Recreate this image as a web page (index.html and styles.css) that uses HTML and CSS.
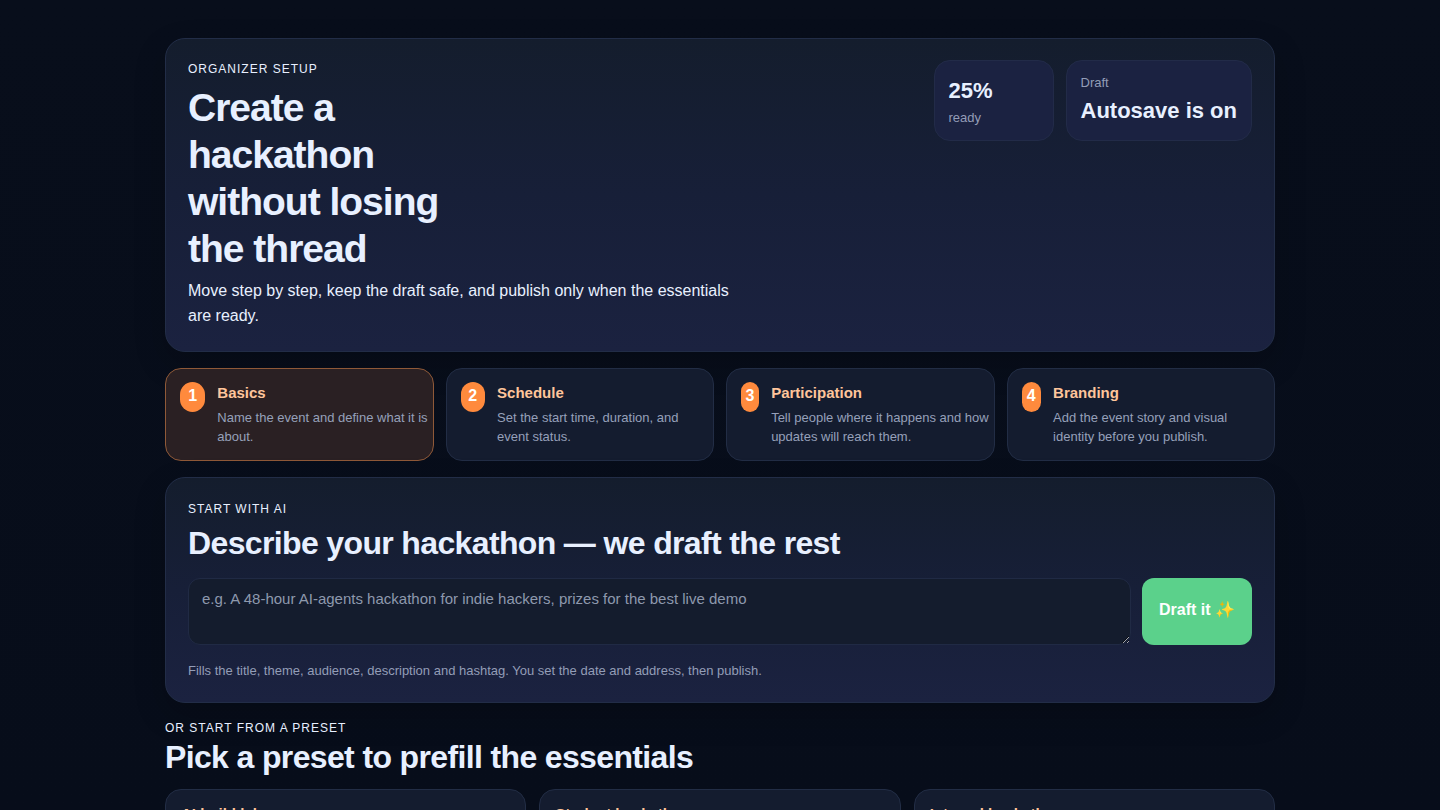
FILE: index.html
```html
<!DOCTYPE html>
<html lang="en">
<head>
<meta charset="utf-8">
<meta name="viewport" content="width=device-width, initial-scale=1">
<title>Create a hackathon</title>
<link rel="stylesheet" href="styles.css">
</head>
<body>
<main class="page">
  <header class="panel hero">
    <div class="hero-copy">
      <p class="eyebrow">Organizer setup</p>
      <h1 class="title">Create a hackathon without losing the thread</h1>
      <p class="lead">Move step by step, keep the draft safe, and publish only when the essentials are ready.</p>
    </div>
    <div class="stats">
      <div class="stat"><strong class="stat-value">25%</strong><span class="stat-label">ready</span></div>
      <div class="stat"><span class="stat-label">Draft</span><strong class="stat-value">Autosave is on</strong></div>
    </div>
  </header>

  <nav class="steps" aria-label="Setup steps">
    <button type="button" class="step step-active" aria-current="step">
      <span class="badge">1</span>
      <span class="step-text"><strong class="card-title">Basics</strong><span class="step-note">Name the event and define what it is about.</span></span>
    </button>
    <button type="button" class="step">
      <span class="badge">2</span>
      <span class="step-text"><strong class="card-title">Schedule</strong><span class="step-note">Set the start time, duration, and event status.</span></span>
    </button>
    <button type="button" class="step">
      <span class="badge">3</span>
      <span class="step-text"><strong class="card-title">Participation</strong><span class="step-note">Tell people where it happens and how updates will reach them.</span></span>
    </button>
    <button type="button" class="step">
      <span class="badge">4</span>
      <span class="step-text"><strong class="card-title">Branding</strong><span class="step-note">Add the event story and visual identity before you publish.</span></span>
    </button>
  </nav>

  <section class="panel">
    <p class="eyebrow">Start with AI</p>
    <h2 class="subtitle" id="ai-title">Describe your hackathon — we draft the rest</h2>
    <form class="prompt">
      <textarea class="prompt-input" rows="2" aria-labelledby="ai-title" placeholder="e.g. A 48-hour AI-agents hackathon for indie hackers, prizes for the best live demo"></textarea>
      <button type="button" class="prompt-button">Draft it ✨</button>
    </form>
    <p class="hint">Fills the title, theme, audience, description and hashtag. You set the date and address, then publish.</p>
  </section>

  <section class="presets">
    <p class="eyebrow">Or start from a preset</p>
    <h2 class="subtitle">Pick a preset to prefill the essentials</h2>
    <div class="preset-grid">
      <button type="button" class="preset"><strong class="card-title">AI build lab</strong></button>
      <button type="button" class="preset"><strong class="card-title">Student hackathon</strong></button>
      <button type="button" class="preset"><strong class="card-title">Internal hackathon</strong></button>
    </div>
  </section>
</main>
</body>
</html>
```
FILE: styles.css
```css
* { box-sizing: border-box; }

html { background: #070d1a; }

body {
  margin: 0;
  height: 100vh;
  overflow: hidden;
  color: #e8f0ff;
  font: 16px/25px "Liberation Sans", Arial, sans-serif;
  background: linear-gradient(180deg, #080e1b, #070d1a);
}

h1, h2, p { margin: 0; }

button, textarea { font: inherit; color: inherit; }

.page {
  max-width: 1142px;
  margin: 0 auto;
  padding: 38px 16px;
  display: grid;
  gap: 16px;
}

.panel {
  padding: 22px;
  border: 1px solid #222d47;
  border-radius: 20px;
  background: linear-gradient(180deg, #141d2d, #171f38 50%, #1b2240);
  box-shadow: 0 12px 32px rgba(0, 0, 0, 0.2);
}

.hero {
  display: flex;
  justify-content: space-between;
  align-items: flex-start;
  gap: 24px;
  padding-top: 21px;
  padding-bottom: 23px;
}

.hero-copy { max-width: 560px; }

.eyebrow {
  font-size: 12px;
  line-height: 18px;
  letter-spacing: 1px;
  text-transform: uppercase;
}

.title {
  max-width: 270px;
  margin: 6px 0;
  font-size: 39px;
  line-height: 47px;
  letter-spacing: -1px;
}

.stats { display: flex; gap: 12px; }

.stat {
  min-width: 120px;
  padding: 13px 14px;
  display: grid;
  gap: 2px;
  border: 1px solid #222b48;
  border-radius: 16px;
  background: #1b2241;
}

.stat-value { font-size: 22px; line-height: 33px; }
.stat-label { font-size: 13px; line-height: 18px; color: #939db7; }

.steps {
  display: grid;
  grid-template-columns: repeat(4, 1fr);
  gap: 12px;
}

.step {
  display: flex;
  align-items: flex-start;
  gap: 12px;
  padding: 13px 4px 14px 14px;
  border: 1px solid #222d45;
  border-radius: 16px;
  background: #141c2f;
  text-align: left;
}

.step-active { background: #2a2023; border-color: #8f5938; }

.badge {
  width: 30px;
  height: 30px;
  border-radius: 15px;
  background: #ff8a3d;
  color: #fff;
  font-weight: 700;
  line-height: 28px;
  text-align: center;
}

.step-text { display: grid; gap: 4px; }

.card-title {
  color: #ffc59b;
  font-size: 15px;
  line-height: 22px;
}

.step-note { font-size: 13px; line-height: 19px; color: #96a0ba; }

.subtitle {
  margin-top: 6px;
  font-size: 32px;
  line-height: 38px;
  letter-spacing: -0.02em;
}

.prompt {
  display: flex;
  gap: 11px;
  margin: 16px 0;
}

.prompt-input {
  flex: 1;
  min-width: 0;
  height: 67px;
  padding: 8px 13px;
  border: 1px solid #202a44;
  border-radius: 12px;
  background: #141c2d;
  font-size: 15px;
  line-height: 23px;
  resize: vertical;
}

.prompt-input::placeholder { color: #8e99ad; }

.prompt-button {
  padding: 0 17px 4px;
  border: 0;
  border-radius: 12px;
  background: #5bd18b;
  color: #fff;
  font-weight: 700;
}

.hint { font-size: 13px; line-height: 19px; color: #939db7; }

.presets .subtitle { margin-top: 1px; }

.preset-grid {
  display: grid;
  grid-template-columns: repeat(3, 1fr);
  gap: 13px;
  margin-top: 13px;
}

.preset {
  min-height: 120px;
  padding: 13px 15px;
  display: flex;
  align-items: flex-start;
  border: 1px solid #222d45;
  border-radius: 16px;
  background: #141c2f;
  text-align: left;
}
```
